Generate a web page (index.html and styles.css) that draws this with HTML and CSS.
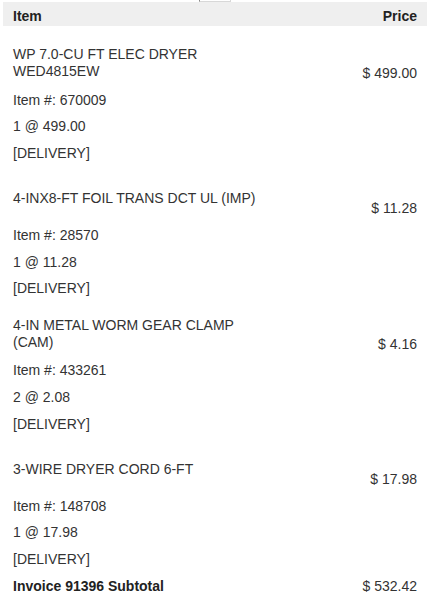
FILE: index.html
```html
<!DOCTYPE html>
<html>
<head>
<meta charset="utf-8">
<link rel="stylesheet" href="styles.css">
</head>
<body>
<div class="tab-edge"></div>
<div class="invoice">
  <div class="head">
    <span>Item</span>
    <span>Price</span>
  </div>

  <div class="item">
    <div class="name-row">
      <div class="name">WP 7.0-CU FT ELEC DRYER WED4815EW</div>
      <div class="price">$ 499.00</div>
    </div>
    <div class="detail">Item #: 670009</div>
    <div class="detail">1 @ 499.00</div>
    <div class="detail">[DELIVERY]</div>
  </div>

  <div class="item">
    <div class="name-row">
      <div class="name">4-INX8-FT FOIL TRANS DCT UL (IMP)</div>
      <div class="price">$ 11.28</div>
    </div>
    <div class="detail">Item #: 28570</div>
    <div class="detail">1 @ 11.28</div>
    <div class="detail">[DELIVERY]</div>
  </div>

  <div class="item">
    <div class="name-row">
      <div class="name">4-IN METAL WORM GEAR CLAMP (CAM)</div>
      <div class="price">$ 4.16</div>
    </div>
    <div class="detail">Item #: 433261</div>
    <div class="detail">2 @ 2.08</div>
    <div class="detail">[DELIVERY]</div>
  </div>

  <div class="item">
    <div class="name-row">
      <div class="name">3-WIRE DRYER CORD 6-FT</div>
      <div class="price">$ 17.98</div>
    </div>
    <div class="detail">Item #: 148708</div>
    <div class="detail">1 @ 17.98</div>
    <div class="detail">[DELIVERY]</div>
  </div>

  <div class="subtotal">
    <span class="sub-label">Invoice 91396 Subtotal</span>
    <span>$ 532.42</span>
  </div>
</div>
</body>
</html>
```

FILE: styles.css
```css
html, body {
  margin: 0;
  padding: 0;
  background: #ffffff;
}

body {
  font-family: "Liberation Sans", Arial, sans-serif;
  font-size: 14px;
  color: #333333;
  position: relative;
}

.tab-edge {
  position: absolute;
  left: 199px;
  top: -10px;
  width: 30px;
  height: 10px;
  border: 1px solid #d8d8d8;
  border-left-color: #8a8a8a;
  background: #ffffff;
}

.invoice {
  margin: 2px 0 0 3px;
  width: 424px;
}

.head {
  height: 24px;
  box-sizing: border-box;
  background: #efefef;
  display: flex;
  justify-content: space-between;
  align-items: center;
  padding: 5px 10px 0;
  font-weight: bold;
  color: #222222;
  line-height: 17px;
  margin-bottom: 5.33px;
}

.name-row {
  height: 55.33px;
  display: flex;
  justify-content: space-between;
  padding: 0 10px;
}

.name {
  width: 252px;
  line-height: 17px;
  align-self: center;
  padding-top: 9px;
}

.price {
  align-self: flex-end;
  line-height: 17px;
  padding-bottom: 4.5px;
}

.detail {
  height: 26.67px;
  line-height: 26.67px;
  padding: 0 10px;
}

.subtotal {
  height: 26.67px;
  display: flex;
  justify-content: space-between;
  align-items: center;
  padding: 0 10px;
}

.sub-label {
  font-weight: bold;
  color: #222222;
}
```
